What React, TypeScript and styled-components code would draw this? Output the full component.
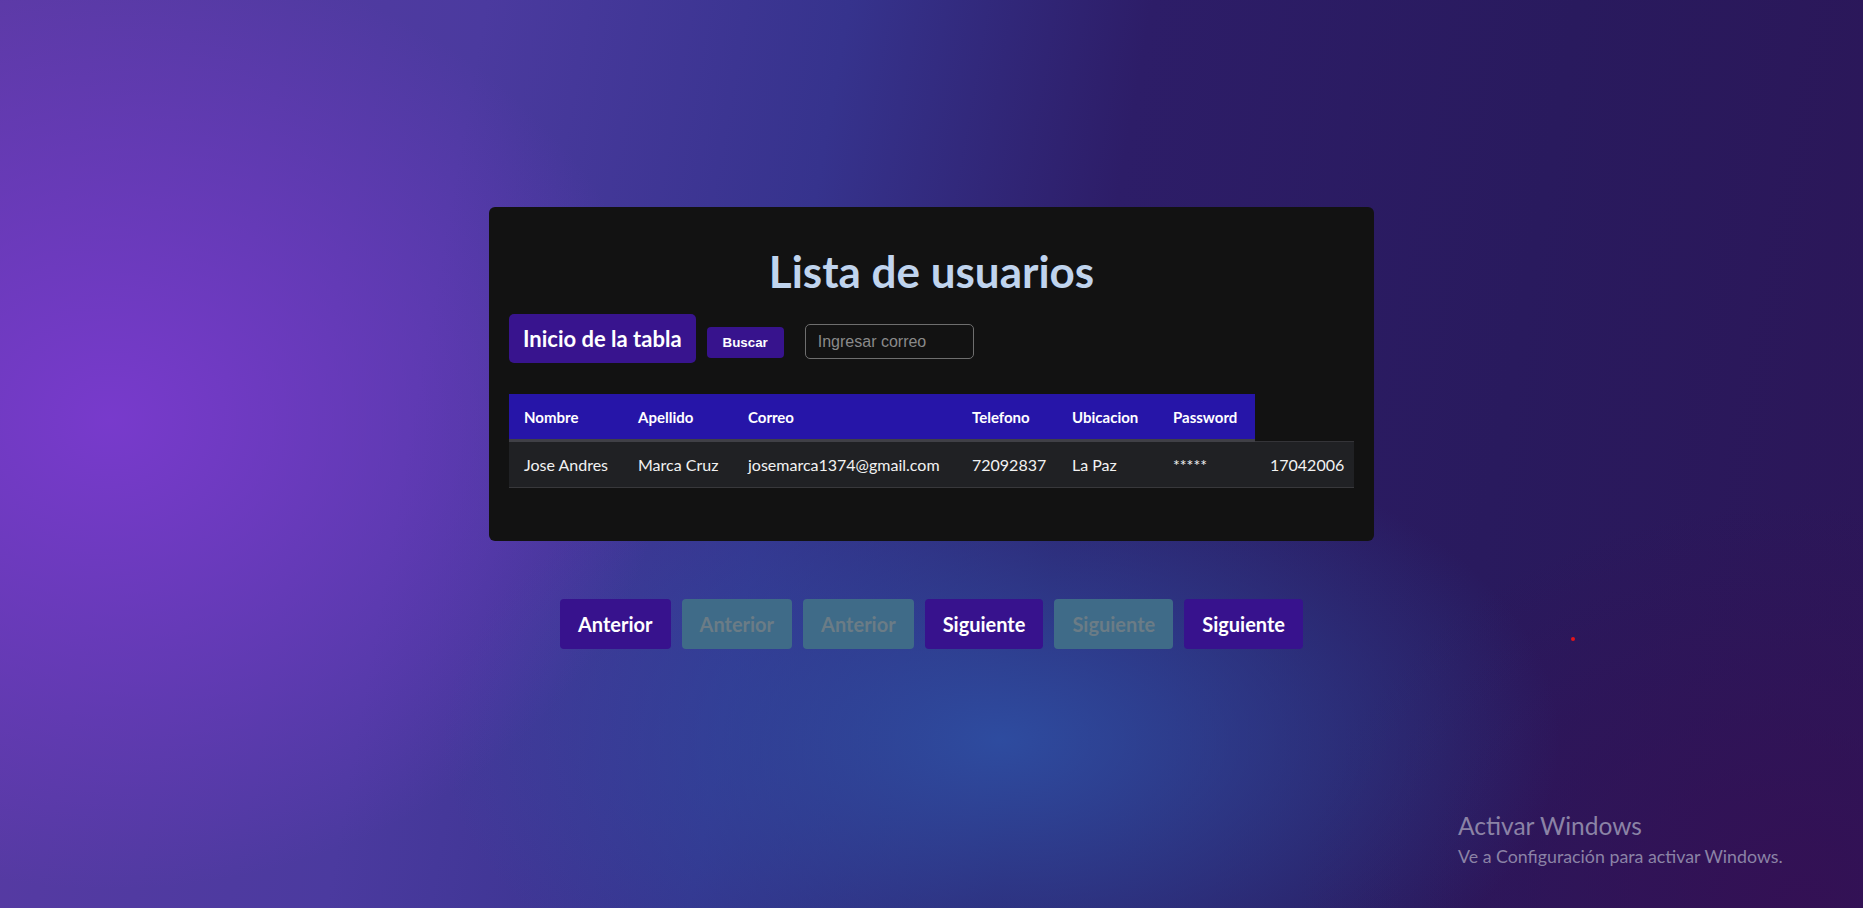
import React from "react";
import styled, { createGlobalStyle } from "styled-components";

const GlobalStyle = createGlobalStyle`
  html, body { margin: 0; padding: 0; }
  body { font-family: Lato, "Open Sans", sans-serif; }
  * { box-sizing: border-box; }
`;

const Page = styled.main`
  position: relative;
  min-height: 100vh;
  overflow: hidden;
  display: flex;
  flex-direction: column;
  align-items: center;
  padding-top: 207px;
  background-color: #2a1a5e;
  background-image:
    radial-gradient(ellipse 560px 470px at 110px 420px, rgba(122, 58, 206, 0.95), rgba(122, 58, 206, 0) 100%),
    radial-gradient(ellipse 560px 320px at 1000px 740px, rgba(46, 78, 162, 0.95), rgba(46, 78, 162, 0) 100%),
    radial-gradient(ellipse 500px 400px at 1800px 900px, rgba(52, 16, 84, 0.9), rgba(52, 16, 84, 0) 100%),
    linear-gradient(100deg, #5a3aa4 0%, #4b3a9f 24%, #36338d 42%, #2d1d68 57%, #291a5e 78%, #2c1658 100%);
`;

const Card = styled.section`
  width: 885px;
  padding: 20px;
  background: #121212;
  border-radius: 6px;
`;

const Title = styled.h1`
  margin: 18px 0 17px;
  text-align: center;
  font-family: Lato, "Open Sans", sans-serif;
  font-weight: 700;
  font-size: 44px;
  line-height: 52px;
  color: #c0d4ee;
`;

const Toolbar = styled.div`
  display: flex;
  align-items: flex-start;
  height: 49px;
`;

const PrimaryButton = styled.button`
  height: 49px;
  padding: 0 14px;
  border: none;
  border-radius: 5px;
  background: #38148e;
  color: #ffffff;
  font-family: Lato, "Open Sans", sans-serif;
  font-weight: 700;
  font-size: 22px;
  cursor: pointer;
`;

const SmallButton = styled.button`
  margin: 13px 0 0 11px;
  height: 31px;
  padding: 0 16px;
  border: none;
  border-radius: 4px;
  background: #37138d;
  color: #ffffff;
  font-family: "Liberation Sans", Arial, sans-serif;
  font-weight: 700;
  font-size: 13.33px;
  cursor: pointer;
`;

const SearchInput = styled.input`
  margin: 10px 0 0 21px;
  width: 169px;
  height: 35px;
  padding: 0 12px;
  border: 1px solid #6e6e6e;
  border-radius: 5px;
  background: transparent;
  color: #dddddd;
  font-family: "Liberation Sans", Arial, sans-serif;
  font-size: 16px;
  outline: none;
  &::placeholder { color: #8a8a8a; }
`;

const Table = styled.table`
  margin: 31px 0 33px;
  width: 845px;
  table-layout: fixed;
  border-collapse: separate;
  border-spacing: 0;
  font-family: Lato, "Open Sans", sans-serif;
`;

const Col = styled.col<{ $w: number }>`
  width: ${(p) => p.$w}px;
`;

const Th = styled.th`
  height: 48px;
  padding: 0 15px;
  text-align: left;
  background: #2615a8;
  border-bottom: 3px solid #404046;
  color: #ffffff;
  font-weight: 700;
  font-size: 15px;
`;

const BlankTh = styled.th`
  height: 48px;
  padding: 0;
  background: transparent;
  border-bottom: 1px solid #343438;
`;

const Td = styled.td`
  height: 46px;
  padding: 0 15px;
  background: #202124;
  border-bottom: 1px solid #38383b;
  color: #f2f2f2;
  font-size: 16px;
  font-weight: 400;
  white-space: nowrap;
`;

const Pager = styled.nav`
  margin-top: 58px;
  display: flex;
  gap: 11px;
`;

const PageButton = styled.button<{ $disabled?: boolean }>`
  height: 50px;
  padding: 0 18px;
  border: none;
  border-radius: 4px;
  background: ${(p) => (p.$disabled ? "#3f6b88" : "#37128d")};
  color: ${(p) => (p.$disabled ? "#6b7c86" : "#ffffff")};
  font-family: Lato, "Open Sans", sans-serif;
  font-weight: 700;
  font-size: 20px;
  cursor: ${(p) => (p.$disabled ? "default" : "pointer")};
`;

const Dot = styled.span`
  position: absolute;
  left: 1571px;
  top: 637px;
  width: 4px;
  height: 4px;
  border-radius: 50%;
  background: #e4141a;
`;

const Watermark = styled.div`
  position: absolute;
  left: 1458px;
  top: 811px;
  color: #8b83a6;
  font-family: Lato, "Open Sans", sans-serif;
  pointer-events: none;
`;

const WatermarkTitle = styled.div`
  font-size: 24.5px;
  line-height: 29px;
`;

const WatermarkText = styled.div`
  margin-top: 6px;
  font-size: 17.8px;
  line-height: 20px;
`;

const headers = ["Nombre", "Apellido", "Correo", "Telefono", "Ubicacion", "Password"];
const row = ["Jose Andres", "Marca Cruz", "josemarca1374@gmail.com", "72092837", "La Paz", "*****", "17042006"];
const widths = [114, 110, 224, 100, 101, 97, 99];

const pages: { label: string; disabled: boolean }[] = [
  { label: "Anterior", disabled: false },
  { label: "Anterior", disabled: true },
  { label: "Anterior", disabled: true },
  { label: "Siguiente", disabled: false },
  { label: "Siguiente", disabled: true },
  { label: "Siguiente", disabled: false },
];

export default function App() {
  return (
    <>
      <GlobalStyle />
      <Page>
        <Card>
          <Title>Lista de usuarios</Title>
          <Toolbar>
            <PrimaryButton>Inicio de la tabla</PrimaryButton>
            <SmallButton>Buscar</SmallButton>
            <SearchInput placeholder="Ingresar correo" />
          </Toolbar>
          <Table>
            <colgroup>
              {widths.map((w, i) => (
                <Col key={i} $w={w} />
              ))}
            </colgroup>
            <thead>
              <tr>
                {headers.map((h) => (
                  <Th key={h}>{h}</Th>
                ))}
                <BlankTh />
              </tr>
            </thead>
            <tbody>
              <tr>
                {row.map((c, i) => (
                  <Td key={i}>{c}</Td>
                ))}
              </tr>
            </tbody>
          </Table>
        </Card>
        <Pager>
          {pages.map((p, i) => (
            <PageButton key={i} $disabled={p.disabled}>
              {p.label}
            </PageButton>
          ))}
        </Pager>
        <Dot />
        <Watermark>
          <WatermarkTitle>Activar Windows</WatermarkTitle>
          <WatermarkText>Ve a Configuración para activar Windows.</WatermarkText>
        </Watermark>
      </Page>
    </>
  );
}
